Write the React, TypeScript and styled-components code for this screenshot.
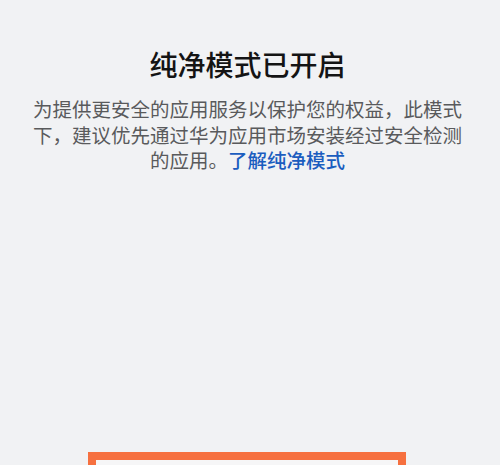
import styled, { createGlobalStyle } from "styled-components";

const GlobalStyle = createGlobalStyle`
  html, body {
    margin: 0;
    padding: 0;
    background: #f1f2f4;
  }
  body {
    font-family: "Noto Sans CJK SC", "Noto Sans", sans-serif;
  }
`;

const Page = styled.div`
  width: 500px;
  height: 465px;
  overflow: hidden;
  background: #f1f2f4;
  display: flex;
  flex-direction: column;
  align-items: center;
`;

const Content = styled.section`
  box-sizing: border-box;
  width: 100%;
  padding: 44px 35px 0 30px;
  display: flex;
  flex-direction: column;
  align-items: center;
`;

const Title = styled.h1`
  margin: 0;
  font-size: 28px;
  line-height: 40px;
  font-weight: 500;
  color: #141414;
`;

const Desc = styled.p`
  margin: 12px 0 0;
  font-size: 19.5px;
  line-height: 25.5px;
  font-weight: 400;
  color: #595a5c;
  text-align: center;
`;

const LearnMore = styled.a`
  color: #1b5dbf;
  font-weight: 500;
  text-decoration: none;
  cursor: pointer;
`;

const Highlight = styled.div`
  box-sizing: border-box;
  margin-top: auto;
  margin-bottom: -60px;
  margin-right: 6px;
  width: 318px;
  height: 73px;
  border: 8px solid #f6703f;
  background: #f6f6f7;
  flex-shrink: 0;
`;

export default function App() {
  return (
    <>
      <GlobalStyle />
      <Page>
        <Content>
          <Title>纯净模式已开启</Title>
          <Desc>
            为提供更安全的应用服务以保护您的权益，此模式下，建议优先通过华为应用市场安装经过安全检测的应用。
            <LearnMore>了解纯净模式</LearnMore>
          </Desc>
        </Content>
        <Highlight />
      </Page>
    </>
  );
}
